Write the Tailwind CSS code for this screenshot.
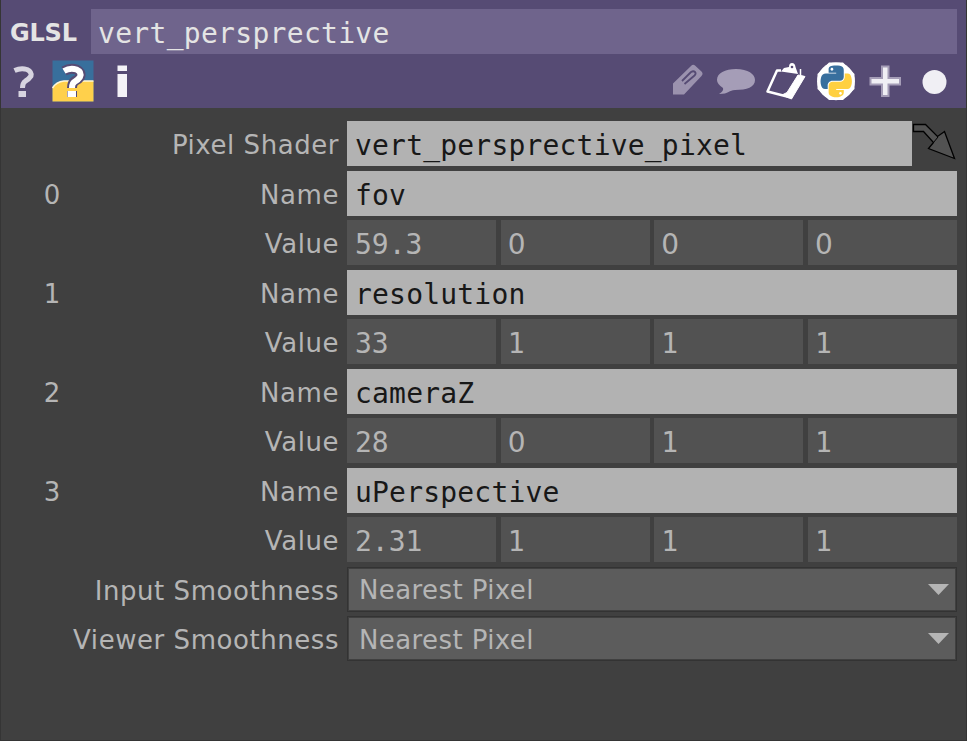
<!DOCTYPE html>
<html lang="en">
<head>
<meta charset="utf-8">
<title>GLSL parameters</title>
<script src="https://cdn.jsdelivr.net/npm/@tailwindcss/browser@4"></script>
</head>
<body class="w-[967px] h-[741px] overflow-hidden bg-[#404040] font-['DejaVu_Sans',sans-serif] text-[#b5b5b5] text-[26px]">
<div class="w-[967px] h-[741px] border-l border-r border-b border-[#353535] flex flex-col">
  <header class="h-[108px] bg-[#564b74] pt-[9px] shrink-0">
    <div class="flex h-[45px] pr-[9px]">
      <div class="w-[90px] pl-[9px] leading-[48px] text-[24px] font-bold text-[#e4e4e4] tracking-[-0.2px]">GLSL</div>
      <div class="flex-1 bg-[#6f648c] pl-[7px] font-['DejaVu_Sans_Mono',monospace] text-[28px] leading-[49px] tracking-[0.3px] text-[#e4e4e4]">vert_persprective</div>
    </div>
    <div class="flex h-[54px]">
      <svg class="w-[140px] h-[54px]" viewBox="1 54 140 54">
        <rect x="52.500" y="60.500" width="41" height="41" fill="#386f9c"/>
        <path d="M52.500 88Q56 82 64 81H93.500V101.500H52.500Z" fill="#ffd04b"/>
        <path d="M52.500 88Q56 82 64 81H93.500" fill="none" stroke="#fff6d8" stroke-width="1.500"/>
        <g fill="none" stroke-linejoin="round">
          <path d="M14.500 70.500Q21 67.500 27 69.500Q32 72 31 76Q29 79 25.500 81Q22.500 83 22.500 88" stroke="#d7d4e0" stroke-width="5"/>
          <path d="M18.500 91H26V97H18.500Z" fill="#d7d4e0"/>
          <path d="M64 71Q70 67.500 76.500 69.500Q82 72 80 77Q78 80 75 81Q72 83 72 88M72 91V97" stroke="#564b74" stroke-width="10"/>
          <path d="M64 71Q70 67.500 76.500 69.500Q82 72 80 77Q78 80 75 81.500Q72 83 72 88" stroke="#fff" stroke-width="6"/>
          <path d="M67.500 91H76V97H67.500Z" fill="#fff"/>
        </g>
        <path d="M117.500 65.500H127V71H117.500ZM117.500 74H127V97H117.500Z" fill="#f4f3f7"/>
      </svg>
      <svg class="ml-auto w-[306px] h-[54px]" viewBox="660 54 306 54">
        <path d="M673 83.500L691 66Q693 64 695 65.500L702 72Q703.500 74 701.500 76L684 94.500H673Z" fill="#9b92ae"/>
        <path d="M682 81L691 72Q693.500 70.500 695 72T694.500 75.500L684.500 84" fill="none" stroke="#564b74" stroke-width="1.800"/>
        <path d="M736 69C748 69 755 74 755 80C755 87 747 90 735 90C729 90 729 94 719 94Q724 91 723 88Q717 84 717 80C717 73 725 69 736 69Z" fill="#a59db7"/>
        <path d="M781 70.500H777L767.500 91.500L789 97L803 77H797" fill="none" stroke="#fff" stroke-width="2.500" stroke-linejoin="round"/>
        <path d="M798 75L805 76.500L791.500 99L782 95L787 92.500Z" fill="#fff" stroke="#fff" stroke-width="1"/>
        <path d="M781 71.500L784 68L789 67Q789 63 792 63T795.500 67L798 74Z" fill="#fff"/>
        <path d="M800.500 69V76" stroke="#fff" stroke-width="1.500"/>
        <circle cx="792" cy="67" r="1.300" fill="#564b74"/>
        <path d="M829 62.500H843L854.500 74V89L843 100H829L817.500 89V74Z" fill="#fff"/>
        <circle cx="836" cy="81.300" r="18.900" fill="#fff"/>
        <g transform="translate(820.500 65.500) scale(.283)">
          <path fill="#386f9e" d="M54.900 0c-4.600 0-9 .4-12.800 1.100C30.800 3.100 28.700 7.300 28.700 15v10.200h26.800v3.400H18.700c-7.800 0-14.600 4.700-16.700 13.600-2.500 10.200-2.600 16.600 0 27.200 1.900 7.900 6.500 13.600 14.200 13.600h9.200V70.800c0-8.800 7.700-16.600 16.700-16.600h26.700c7.500 0 13.400-6.100 13.400-13.600V15c0-7.300-6.100-12.700-13.400-13.900C64.300.3 59.500 0 54.900 0zM40.400 8.200c2.800 0 5 2.300 5 5.100s-2.200 5.100-5 5.100-5-2.300-5-5.100 2.200-5.100 5-5.100z"/>
          <path fill="#ffd040" d="M85.600 28.700v11.900c0 9.200-7.800 17-16.700 17H42.200c-7.300 0-13.400 6.200-13.400 13.600v25.500c0 7.300 6.300 11.500 13.400 13.600 8.500 2.500 16.600 2.900 26.700 0 6.700-1.900 13.400-5.900 13.400-13.600V86.500H55.500v-3.400h40.100c7.800 0 10.700-5.400 13.400-13.600 2.800-8.400 2.700-16.400 0-27.200-1.900-7.700-5.600-13.600-13.400-13.600zM70.600 93.300c2.800 0 5 2.300 5 5.100s-2.200 5.100-5 5.100-5-2.300-5-5.100 2.200-5.100 5-5.100z"/>
        </g>
        <path d="M881 65.500H889.500V77H901V85.500H889.500V97H881V85.500H869.500V77H881Z" fill="#a59db7"/>
        <path d="M883 67.500H887.500V79H899V83.500H887.500V95H883V83.500H871.500V79H883Z" fill="#f0eff4"/>
        <circle cx="934.500" cy="82" r="12" fill="#f0eff4"/>
      </svg>
    </div>
  </header>

  <main class="pt-[13px] grid grid-cols-[102px_236px_610px] gap-x-0 auto-rows-[49.5px] leading-[49px]">
    <div></div>
    <div class="text-right tracking-[0.55px]">Pixel Shader</div>
    <div class="flex h-[45px] ml-2 -mr-2">
      <div class="w-[565px] pl-[8px] bg-[#b2b2b2] text-[#181818] font-['DejaVu_Sans_Mono',monospace] text-[28px] tracking-[0.19px]">vert_persprective_pixel</div>
      <svg class="w-[45px] h-[45px]" viewBox="912 121 45 45"><path d="M913.500 124.500H925.500L937.500 136.500L944.500 131.500L954.500 158.500L928.500 148.500L933.500 142.500L923.500 131.500H913.500Z" fill="#525252" stroke="#000" stroke-width="1.300"/><path d="M933.500 142.500L938 137" stroke="#000"/></svg>
    </div>

    <div class="text-center">0</div>
    <div class="text-right tracking-[0.55px]">Name</div>
    <div class="h-[45px] ml-2 -mr-2 pl-[8px] bg-[#b2b2b2] text-[#181818] font-['DejaVu_Sans_Mono',monospace] text-[28px] tracking-[0.19px]">fov</div>
    <div></div>
    <div class="text-right tracking-[0.55px]">Value</div>
    <div class="h-[45px] ml-2 -mr-2 grid grid-cols-4 grid-rows-[45px] gap-x-[4.5px] font-['DejaVu_Sans_Mono',monospace] text-[28px]">
      <div class="bg-[#525252] pl-[8px]">59.3</div><div class="bg-[#525252] pl-[7px] font-['DejaVu_Sans',sans-serif]">0</div><div class="bg-[#525252] pl-[7px] font-['DejaVu_Sans',sans-serif]">0</div><div class="bg-[#525252] pl-[7px] font-['DejaVu_Sans',sans-serif]">0</div>
    </div>

    <div class="text-center">1</div>
    <div class="text-right tracking-[0.55px]">Name</div>
    <div class="h-[45px] ml-2 -mr-2 pl-[8px] bg-[#b2b2b2] text-[#181818] font-['DejaVu_Sans_Mono',monospace] text-[28px] tracking-[0.19px]">resolution</div>
    <div></div>
    <div class="text-right tracking-[0.55px]">Value</div>
    <div class="h-[45px] ml-2 -mr-2 grid grid-cols-4 grid-rows-[45px] gap-x-[4.5px] font-['DejaVu_Sans_Mono',monospace] text-[28px]">
      <div class="bg-[#525252] pl-[8px]">33</div><div class="bg-[#525252] pl-[7px]">1</div><div class="bg-[#525252] pl-[7px]">1</div><div class="bg-[#525252] pl-[7px]">1</div>
    </div>

    <div class="text-center">2</div>
    <div class="text-right tracking-[0.55px]">Name</div>
    <div class="h-[45px] ml-2 -mr-2 pl-[8px] bg-[#b2b2b2] text-[#181818] font-['DejaVu_Sans_Mono',monospace] text-[28px] tracking-[0.19px]">cameraZ</div>
    <div></div>
    <div class="text-right tracking-[0.55px]">Value</div>
    <div class="h-[45px] ml-2 -mr-2 grid grid-cols-4 grid-rows-[45px] gap-x-[4.5px] font-['DejaVu_Sans_Mono',monospace] text-[28px]">
      <div class="bg-[#525252] pl-[8px]">28</div><div class="bg-[#525252] pl-[7px] font-['DejaVu_Sans',sans-serif]">0</div><div class="bg-[#525252] pl-[7px]">1</div><div class="bg-[#525252] pl-[7px]">1</div>
    </div>

    <div class="text-center">3</div>
    <div class="text-right tracking-[0.55px]">Name</div>
    <div class="h-[45px] ml-2 -mr-2 pl-[8px] bg-[#b2b2b2] text-[#181818] font-['DejaVu_Sans_Mono',monospace] text-[28px] tracking-[0.19px]">uPerspective</div>
    <div></div>
    <div class="text-right tracking-[0.55px]">Value</div>
    <div class="h-[45px] ml-2 -mr-2 grid grid-cols-4 grid-rows-[45px] gap-x-[4.5px] font-['DejaVu_Sans_Mono',monospace] text-[28px]">
      <div class="bg-[#525252] pl-[8px]">2.31</div><div class="bg-[#525252] pl-[7px]">1</div><div class="bg-[#525252] pl-[7px]">1</div><div class="bg-[#525252] pl-[7px]">1</div>
    </div>

    <div class="col-span-2 text-right tracking-[0.55px]">Input Smoothness</div>
    <div class="h-[45px] ml-2 -mr-2 border border-[#333] p-px bg-[#404040]">
      <div class="h-[41px] bg-[#5c5c5c] pl-[10px] pr-[6px] flex items-center justify-between tracking-[0.4px]"><span class="pt-[3px] leading-[41px]">Nearest Pixel</span><svg class="w-[21px] h-[11px]" viewBox="0 0 21 11"><path d="M0 0H21L10.500 11Z" fill="#b5b5b5"/></svg></div>
    </div>
    <div class="col-span-2 text-right tracking-[0.55px]">Viewer Smoothness</div>
    <div class="h-[45px] ml-2 -mr-2 border border-[#333] p-px bg-[#404040]">
      <div class="h-[41px] bg-[#5c5c5c] pl-[10px] pr-[6px] flex items-center justify-between tracking-[0.4px]"><span class="pt-[3px] leading-[41px]">Nearest Pixel</span><svg class="w-[21px] h-[11px]" viewBox="0 0 21 11"><path d="M0 0H21L10.500 11Z" fill="#b5b5b5"/></svg></div>
    </div>
  </main>
</div>
</body>
</html>
